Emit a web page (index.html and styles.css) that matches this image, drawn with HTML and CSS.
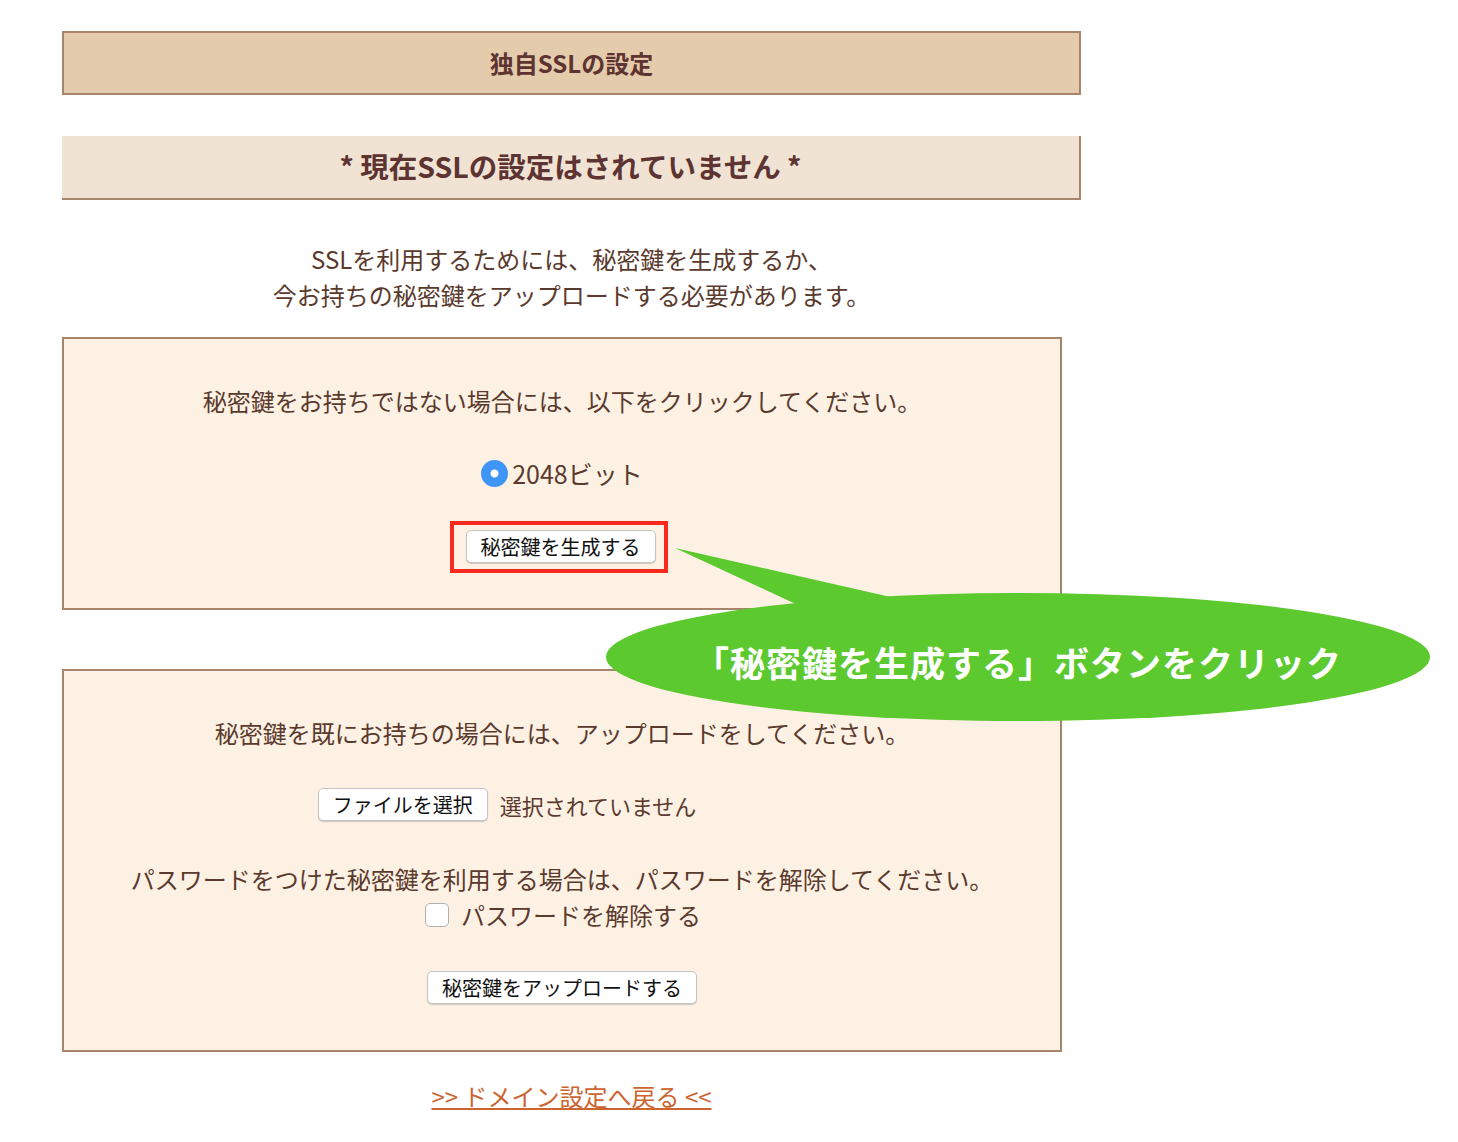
FILE: index.html
```html
<!DOCTYPE html>
<html lang="ja">
<head>
    <meta charset="utf-8">
    <title>独自SSLの設定</title>
    <link rel="stylesheet" href="styles.css">
</head>
<body>

<div class="page">
    <h1 class="titleBar">独自SSLの設定</h1>

    <h2 class="statusBar">* 現在SSLの設定はされていません *</h2>

    <p class="intro">
        SSLを利用するためには、秘密鍵を生成するか、<br>
        今お持ちの秘密鍵をアップロードする必要があります。
    </p>

    <div class="panel">
        <p class="panelText">秘密鍵をお持ちではない場合には、以下をクリックしてください。</p>
        <label class="radioRow">
            <input type="radio" name="bits" checked>2048ビット
        </label>
        <div class="btnRow">
            <span class="highlight"><button class="btn">秘密鍵を生成する</button></span>
        </div>
    </div>

    <div class="panel panelUpload">
        <p class="panelText">秘密鍵を既にお持ちの場合には、アップロードをしてください。</p>
        <div class="fileRow">
            <button class="btn">ファイルを選択</button>
            <span class="fileName">選択されていません</span>
        </div>
        <p class="panelText passText">パスワードをつけた秘密鍵を利用する場合は、パスワードを解除してください。</p>
        <label class="checkRow">
            <input type="checkbox">パスワードを解除する
        </label>
        <div class="btnRow uploadRow">
            <button class="btn">秘密鍵をアップロードする</button>
        </div>
    </div>

    <div class="backLink">
        <a href="#">&gt;&gt; ドメイン設定へ戻る &lt;&lt;</a>
    </div>

    <!-- 吹き出し -->
    <div class="callout">
        <svg width="840" height="190" viewBox="0 0 840 190">
            <polygon points="75,8 200,66 295,58" fill="#5cc92e"/>
            <ellipse cx="418" cy="117" rx="412" ry="64" fill="#5cc92e"/>
            <text x="418" y="121" text-anchor="middle" dominant-baseline="central" class="calloutText">「秘密鍵を生成する」ボタンをクリック</text>
        </svg>
    </div>
</div>

</body>
</html>
```

FILE: styles.css
```css
body {
    margin: 0;
    background-color: #ffffff;
    color: #5b3a2e;
    font-family: "Noto Sans CJK JP", "Noto Sans", sans-serif;
}

.page {
    position: relative;
    width: 1019px;
    padding: 31px 0 40px 62px;
}

.titleBar {
    margin: 0;
    height: 60px;
    line-height: 60px;
    background-color: #e4cbab;
    border: 2px solid #a8846a;
    text-align: center;
    font-size: 24px;
    font-weight: bold;
    color: #5e3432;
}

.statusBar {
    margin: 41px 0 0 0;
    height: 62px;
    line-height: 60px;
    background-color: #f1e3d4;
    border-right: 2px solid #a8846a;
    border-bottom: 2px solid #a8846a;
    text-align: center;
    font-size: 28.5px;
    font-weight: bold;
    color: #5e3432;
}

.intro {
    margin: 41px 0 0 0;
    text-align: center;
    font-size: 24px;
    line-height: 36px;
}

.panel {
    width: 996px;
    margin-top: 24px;
    padding: 44px 0 35px 0;
    background-color: #fdf1e4;
    border: 2px solid #a8846a;
    text-align: center;
}

.panelUpload {
    margin-top: 59px;
    padding-bottom: 46px;
}

.panelText {
    margin: 0;
    font-size: 24px;
    line-height: 36px;
}

.radioRow {
    display: flex;
    justify-content: center;
    align-items: center;
    gap: 4px;
    margin-top: 36px;
    height: 36px;
    font-size: 25px;
}

.radioRow input {
    appearance: none;
    margin: 0;
    width: 27px;
    height: 27px;
    border-radius: 50%;
    background: radial-gradient(circle, #ffffff 0 3.5px, #3f95f5 4.5px);
}

.btnRow {
    margin-top: 30px;
}

.highlight {
    display: inline-block;
    margin-right: 7px;
    padding: 5px 8px 6px 12px;
    border: 4px solid #fb2a1e;
}

.btn {
    font-family: "Noto Sans CJK JP", sans-serif;
    font-size: 20px;
    line-height: 23px;
    padding: 4px 14px;
    color: #111111;
    background-color: #ffffff;
    border: 1px solid #c4c4c4;
    border-radius: 5px;
    box-shadow: 0 1px 1px rgba(0, 0, 0, 0.18);
    display: block;
}

.btnRow .btn,
.fileRow .btn {
    display: inline-block;
}

.fileRow {
    display: flex;
    justify-content: center;
    align-items: center;
    gap: 12px;
    margin-top: 37px;
    padding-right: 110px;
}

.fileName {
    font-size: 22px;
}

.passText {
    margin-top: 40px;
}

.checkRow {
    display: flex;
    justify-content: center;
    align-items: center;
    gap: 12px;
    height: 35px;
    font-size: 24px;
    padding-left: 2px;
}

.checkRow input {
    appearance: none;
    margin: 0;
    width: 24px;
    height: 24px;
    border: 1px solid #b0b0b0;
    border-radius: 5px;
    background-color: #ffffff;
}

.uploadRow {
    margin-top: 39px;
}

.backLink {
    margin-top: 26px;
    text-align: center;
    font-size: 24px;
    line-height: 36px;
}

.backLink a {
    color: #cc6430;
}

.callout {
    position: absolute;
    left: 600px;
    top: 540px;
}

.callout svg {
    display: block;
}

.calloutText {
    font-family: "Noto Sans CJK JP", sans-serif;
    font-size: 35px;
    font-weight: bold;
    letter-spacing: 1px;
    fill: #ffffff;
}
```
